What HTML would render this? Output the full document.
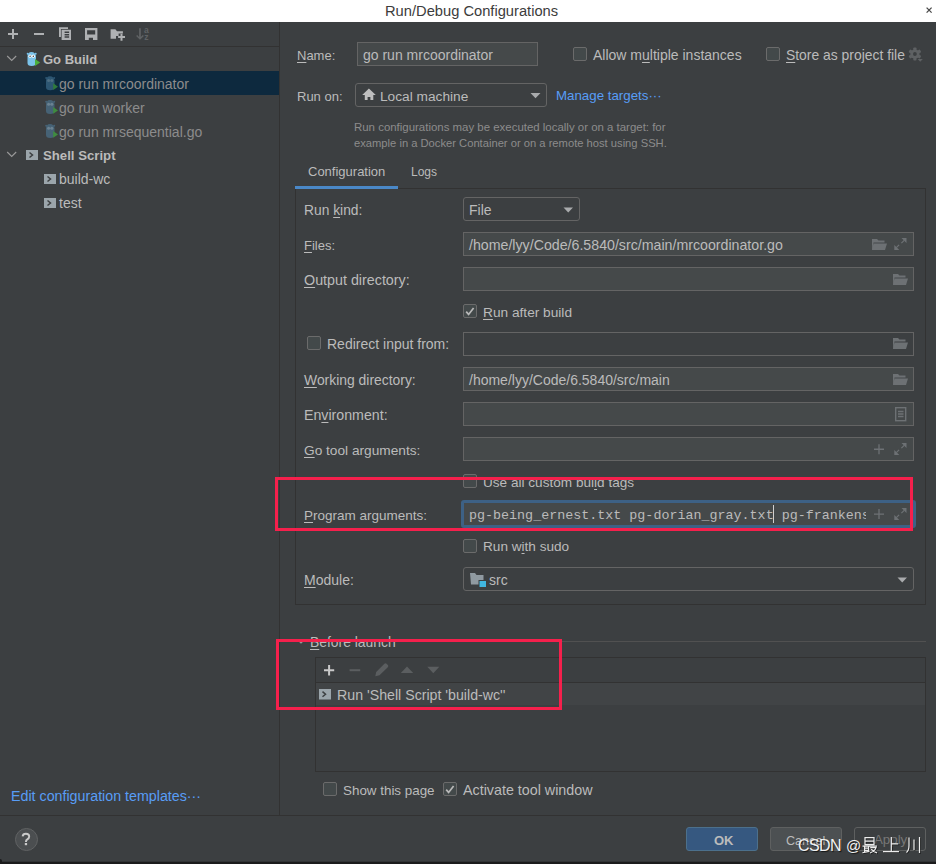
<!DOCTYPE html>
<html><head><meta charset="utf-8">
<style>
*{margin:0;padding:0;box-sizing:border-box}
html,body{width:936px;height:864px;overflow:hidden;background:#3c3f41}
body{position:relative;font-family:"Liberation Sans",sans-serif;font-size:13px;color:#bbbbbb}
.a{position:absolute}
.t{position:absolute;white-space:nowrap;line-height:16px}
u{text-decoration:underline;text-decoration-thickness:1px;text-underline-offset:2px}
.in{position:absolute;background:#45494a;border:1px solid #646464;height:24px}
.dd{position:absolute;background:#3c3f41;border:1px solid #646464;height:24px;border-radius:3px}
.cb{position:absolute;width:14px;height:14px;border:1px solid #6b6b6b;background:#43494a;border-radius:2px}
.lnk{color:#589df6}
.gray{color:#8c8c8c}
svg{position:absolute;overflow:visible}
</style></head><body>
<!-- title bar -->
<div class="a" style="left:0;top:0;width:936px;height:22px;background:#ffffff"></div>
<div class="t" style="left:385px;top:3px;color:#3c3c3c;font-size:14.7px">Run/Debug Configurations</div>
<svg style="left:0;top:0" width="936" height="22"><path d="M926.6 7.6l5 5M931.6 7.6l-5 5" stroke="#4a4a4a" stroke-width="1.3"/></svg>

<!-- left panel separators -->
<div class="a" style="left:0;top:46px;width:279px;height:1px;background:#323232"></div>
<div class="a" style="left:279px;top:22px;width:1px;height:793px;background:#323232"></div>

<!-- toolbar icons -->
<svg style="left:0;top:0" width="160" height="46">
 <g fill="#afb1b3">
  <rect x="12" y="29" width="2" height="10"/><rect x="8" y="33" width="10" height="2"/>
  <rect x="34" y="33" width="10" height="2"/>
  <path d="M59 27.2h9v1.9h-7.1v8h-1.9z"/>
  <path d="M61.6 29.8h9.4v10.2h-9.4z M64.6 31.5v1.5h4.5v-1.5z M64.6 33.9v1.5h4.5v-1.5z M64.6 36.3v1.5h4.5v-1.5z" fill-rule="evenodd"/>
  <path d="M85 28h12.4v12H85z M87.1 30.3v4.3h8.1v-4.3z M88.8 37.7v2.3h4.2v-2.3z" fill-rule="evenodd"/>
  <path d="M110.6 29.3h4.8l1.6 2h5.9v2.2h-4.3v2.4h-2.6v2.8h-5.4z"/>
  <path d="M120.5 33.8h2v2.3h2.5v2h-2.5v2.6h-2v-2.6h-2.4v-2h2.4z"/>
 </g>
 <g fill="#5f6264">
  <path d="M139.1 28.3h1.7v8.6l2-2 1.1 1.1-3.9 3.7-3.9-3.7 1.1-1.1 1.9 2z"/>
 </g>
 <text x="144" y="33.2" font-size="8.6" fill="#5f6264" font-family="Liberation Sans" font-weight="bold">a</text>
 <text x="144.3" y="39.6" font-size="8.6" fill="#5f6264" font-family="Liberation Sans" font-weight="bold">z</text>
</svg>

<!-- tree -->
<div class="a" style="left:0;top:71px;width:279px;height:24px;background:#0d293e"></div>
<svg style="left:0;top:0" width="279" height="220">
 <g fill="none" stroke="#9a9a9a" stroke-width="1.1">
  <path d="M7.2 56l4.5 4.5L16.2 56"/>
  <path d="M7.2 152l4.5 4.5L16.2 152"/>
 </g>
</svg>
<svg style="left:0;top:0" width="100" height="220">
 <defs>
  <g id="gopher">
   <path d="M1 4.5Q1 0 5 0T9.5 4.5V11Q9.5 14 5.2 14T1 11z"/>
   <circle cx="1.2" cy="1.8" r="1"/><circle cx="9.2" cy="1.8" r="1"/>
  </g>
 </defs>
 <!-- Go Build -->
 <g transform="translate(26.5,52)">
  <use href="#gopher" fill="#7bc3ea"/>
  <circle cx="3.6" cy="4.2" r="1.6" fill="#fff"/><circle cx="6.8" cy="4.2" r="1.6" fill="#fff"/>
  <circle cx="3.6" cy="4.3" r=".7" fill="#333"/><circle cx="6.8" cy="4.3" r=".7" fill="#333"/>
  <path d="M8.5 7l5.2 3.5-5.2 3.5z" fill="#4caf3d"/>
 </g>
 <g transform="translate(45,76.3)">
  <use href="#gopher" fill="#2d5672"/>
  <circle cx="3.6" cy="4.2" r="1.5" fill="#4d6e83"/><circle cx="6.8" cy="4.2" r="1.5" fill="#4d6e83"/>
  <path d="M8.2 7l4.8 3.4-4.8 3.4z" fill="#2f7a3c"/>
 </g>
 <g transform="translate(45,100)">
  <use href="#gopher" fill="#466275"/>
  <circle cx="3.6" cy="4.2" r="1.5" fill="#6b8292"/><circle cx="6.8" cy="4.2" r="1.5" fill="#6b8292"/>
  <path d="M8.2 7l4.8 3.4-4.8 3.4z" fill="#3f8c3f"/>
 </g>
 <g transform="translate(45,124)">
  <use href="#gopher" fill="#466275"/>
  <circle cx="3.6" cy="4.2" r="1.5" fill="#6b8292"/><circle cx="6.8" cy="4.2" r="1.5" fill="#6b8292"/>
  <path d="M8.2 7l4.8 3.4-4.8 3.4z" fill="#3f8c3f"/>
 </g>
 <!-- shell icons -->
 <defs>
  <g id="sh"><rect width="12" height="10" fill="#9ba5ab"/><path d="M3.5 2.5l3 2.5-3 2.5" stroke="#3c3f41" stroke-width="1.5" fill="none"/></g>
 </defs>
 <use href="#sh" x="26" y="150"/>
 <use href="#sh" x="44" y="174"/>
 <use href="#sh" x="44" y="198"/>
</svg>

<div class="t" style="left:43px;top:52px;font-weight:bold">Go Build</div>
<div class="t gray" style="left:59px;top:76px;font-size:14px">go run mrcoordinator</div>
<div class="t gray" style="left:59px;top:100px;font-size:14px">go run worker</div>
<div class="t gray" style="left:59px;top:124px;font-size:14px">go run mrsequential.go</div>
<div class="t" style="left:43px;top:148px;font-weight:bold;font-size:13.2px">Shell Script</div>
<div class="t" style="left:59px;top:171px;font-size:14px">build-wc</div>
<div class="t" style="left:59px;top:195px;font-size:14px">test</div>

<div class="t lnk" style="left:11px;top:788px;font-size:14.25px">Edit configuration templates···</div>

<!-- right panel top -->
<div class="t" style="left:297px;top:48px"><u>N</u>ame:</div>
<div class="in" style="left:357px;top:42px;width:181px"></div>
<div class="t" style="left:363px;top:47px;font-size:14px">go run mrcoordinator</div>
<div class="cb" style="left:573px;top:47px"></div>
<div class="t" style="left:593px;top:47px;font-size:14px">Allow m<u>u</u>ltiple instances</div>
<div class="cb" style="left:766px;top:47px"></div>
<div class="t" style="left:786px;top:47px;font-size:13.9px"><u>S</u>tore as project file</div>
<svg style="left:0;top:0" width="936" height="70"><g fill="#5e6163" transform="translate(914.9,54)"><rect x="-1.6" y="-6.5" width="3.2" height="13" rx=".8"/><rect x="-1.6" y="-6.5" width="3.2" height="13" rx=".8" transform="rotate(60)"/><rect x="-1.6" y="-6.5" width="3.2" height="13" rx=".8" transform="rotate(120)"/><circle r="4.6"/><circle r="1.9" fill="#3c3f41"/></g><path d="M917.6 59h5.2l-2.6 2.8z" fill="#5e6163"/></svg>

<div class="t" style="left:297px;top:89px">Run on:</div>
<div class="dd" style="left:355px;top:83px;width:192px"></div>
<svg style="left:0;top:0" width="400" height="110"><path d="M362.2 94.9L368.9 88.6L375.8 94.9H373.3V100H370.4V97.1H367.6V100H364.8V94.9z" fill="#bebebe"/></svg>
<div class="t" style="left:380px;top:89px;font-size:13.7px">Local machine</div>
<svg style="left:530px;top:92px" width="11" height="7"><path d="M0.5 1h10L5.5 6.2z" fill="#a9abad"/></svg>
<div class="t lnk" style="left:556px;top:88px;font-size:13.3px">Manage targets···</div>

<div class="t gray" style="left:354px;top:119px;font-size:11.45px">Run configurations may be executed locally or on a target: for</div>
<div class="t gray" style="left:354px;top:135px;font-size:11.2px">example in a Docker Container or on a remote host using SSH.</div>

<!-- tabs -->
<div class="t" style="left:308px;top:164px">Configuration</div>
<div class="t" style="left:411px;top:164px;font-size:12px">Logs</div>
<div class="a" style="left:295px;top:188px;width:631px;height:417px;border:1px solid #323232"></div>
<div class="a" style="left:295px;top:186px;width:103px;height:3px;background:#4a88c7"></div>

<!-- config rows -->
<div class="t" style="left:304px;top:203px;font-size:13.8px">Run <u>k</u>ind:</div>
<div class="dd" style="left:463px;top:197px;width:117px"></div>
<div class="t" style="left:469px;top:202px;font-size:14px">File</div>
<svg style="left:563px;top:207px" width="11" height="6"><path d="M0.5 0.6h9.5L5.25 5.6z" fill="#a9abad"/></svg>

<div class="t" style="left:304px;top:238px;font-size:13px"><u>F</u>iles:</div>
<div class="in" style="left:463px;top:232px;width:451px"></div>
<div class="t" style="left:469px;top:237px;font-size:14.2px">/home/lyy/Code/6.5840/src/main/mrcoordinator.go</div>

<div class="t" style="left:304px;top:272px;font-size:14.3px"><u>O</u>utput directory:</div>
<div class="in" style="left:463px;top:267px;width:451px"></div>

<div class="cb" style="left:463px;top:304px"></div>
<svg style="left:463px;top:304px" width="14" height="14"><path d="M3.2 7.6l2.4 2.8 5-6.5" stroke="#b9b9b9" stroke-width="1.7" fill="none"/></svg>
<div class="t" style="left:483px;top:305px;font-size:13.7px"><u>R</u>un after build</div>

<div class="cb" style="left:307px;top:336px"></div>
<div class="t" style="left:327px;top:336px;font-size:14px">Redirect input from:</div>
<div class="in" style="left:463px;top:332px;width:451px;background:#3c3f41"></div>

<div class="t" style="left:304px;top:372px;font-size:13.9px"><u>W</u>orking directory:</div>
<div class="in" style="left:463px;top:367px;width:451px"></div>
<div class="t" style="left:469px;top:372px;font-size:14px">/home/lyy/Code/6.5840/src/main</div>

<div class="t" style="left:304px;top:407px;font-size:14.2px">En<u>v</u>ironment:</div>
<div class="in" style="left:463px;top:402px;width:451px"></div>

<div class="t" style="left:304px;top:443px;font-size:13.7px"><u>G</u>o tool arguments:</div>
<div class="in" style="left:463px;top:437px;width:451px"></div>

<div class="cb" style="left:463px;top:474px"></div>
<div class="t" style="left:483px;top:475px;font-size:13.6px">Use all custom bui<u>l</u>d tags</div>

<div class="t" style="left:304px;top:508px;font-size:13.5px"><u>P</u>rogram arguments:</div>
<div class="a" style="left:461px;top:500px;width:455px;height:28px;border:3px solid #3d6185;border-radius:3px;background:#45494a"></div>
<div class="t" style="left:469px;top:508px;font-family:'Liberation Mono',monospace;font-size:13.36px;width:397px;overflow:hidden">pg-being_ernest.txt pg-dorian_gray.txt pg-frankenstein.txt</div>
<div class="a" style="left:773px;top:505px;width:1px;height:18px;background:#d0d0d0"></div>

<div class="cb" style="left:463px;top:539px"></div>
<div class="t" style="left:483px;top:539px;font-size:13.6px">Run w<u>i</u>th sudo</div>

<div class="t" style="left:304px;top:572px;font-size:14px"><u>M</u>odule:</div>
<div class="dd" style="left:463px;top:567px;width:451px"></div>
<svg style="left:470px;top:572px" width="17" height="15"><path d="M0 1h5l1.5 2h7v9.5h-12.5z" fill="#909aa1"/><rect x="8.5" y="8" width="8" height="7" fill="#3c3f41"/><rect x="9.5" y="9" width="6.5" height="6" fill="#40b6e0"/></svg>
<div class="t" style="left:489px;top:572px;font-size:14px">src</div>
<svg style="left:897px;top:577px" width="11" height="6"><path d="M0.5 0.6h9.5L5.25 5.6z" fill="#a9abad"/></svg>

<!-- field icons -->
<svg style="left:0;top:0" width="936" height="864">
 <defs>
  <path id="fold" d="M0 0h5l1.5 1.5h6v2h-11l-1.5 7.5z M1.5 4.5h13.5l-2 6.5h-13z"/>
  <g id="exp"><path d="M12.5 0h-5l5 5z M0.3 12h5l-5-5z" fill="#6d7174"/><path d="M10.2 2.3l-2.8 2.8 M2.3 9.7l2.8-2.8" stroke="#6d7174" stroke-width="1.2"/></g>
  <g id="plus"><path d="M0 4.4h10v1.3H0z M4.35 0h1.3v10h-1.3z"/></g>
 </defs>
 <g fill="#6d7174">
  <use href="#fold" x="872" y="239"/>
  <use href="#fold" x="893" y="274"/>
  <use href="#fold" x="893" y="338"/>
  <use href="#fold" x="893" y="374"/>
  <use href="#plus" x="874" y="444.2"/>
  <use href="#plus" x="874" y="509"/>
 </g>
 <use href="#exp" x="894" y="238"/>
 <use href="#exp" x="894" y="443"/>
 <use href="#exp" x="894" y="508"/>
 <g fill="none" stroke="#6d7174" stroke-width="1.4">
  <rect x="895.7" y="407.7" width="10" height="13"/>
  <path d="M898 411.5h5.5M898 414h5.5M898 416.5h5.5"/>
 </g>
</svg>

<!-- before launch -->
<div class="a" style="left:397px;top:641px;width:529px;height:1px;background:#515151"></div>
<svg style="left:297px;top:639px" width="8" height="6"><path d="M1 1l3 3 3-3" stroke="#9a9a9a" stroke-width="1.1" fill="none"/></svg>
<div class="t" style="left:310px;top:634px;font-size:13.9px"><u>B</u>efore launch</div>
<div class="a" style="left:315px;top:657px;width:611px;height:115px;border:1px solid #323232"></div>
<div class="a" style="left:316px;top:682px;width:609px;height:1px;background:#323232"></div>
<div class="a" style="left:316px;top:683px;width:609px;height:22px;background:#414446"></div>
<svg style="left:0;top:0" width="460" height="720">
 <path d="M324 670.2h10.2M329.1 665v10.5" stroke="#c9c9c9" stroke-width="2"/>
 <path d="M349.6 670.2h10.6" stroke="#5b5e60" stroke-width="2"/>
 <path d="M375.3 676.2L376.2 672L384.4 663.8Q385.5 662.7 386.6 663.8L387.8 665Q388.9 666.1 387.8 667.2L379.5 675.3z" fill="#5b5e60"/>
 <path d="M400.8 673l6.2-6.5 6.2 6.5z" fill="#5b5e60"/>
 <path d="M427.3 666.8h12l-6 6.4z" fill="#5b5e60"/>
</svg>
<svg style="left:319px;top:689px" width="12" height="11"><rect width="12" height="10.5" fill="#9ba5ab"/><path d="M3.5 2.6l3 2.6-3 2.6" stroke="#3c3f41" stroke-width="1.5" fill="none"/></svg>
<div class="t" style="left:337px;top:687px;font-size:14.2px">Run 'Shell Script 'build-wc''</div>

<div class="cb" style="left:323px;top:782px"></div>
<div class="t" style="left:343px;top:783px;font-size:13.4px">Show this page</div>
<div class="cb" style="left:443px;top:782px"></div>
<svg style="left:443px;top:782px" width="14" height="14"><path d="M3.2 7.6l2.4 2.8 5-6.5" stroke="#b9b9b9" stroke-width="1.7" fill="none"/></svg>
<div class="t" style="left:463px;top:782px;font-size:14.3px">Activate tool window</div>

<!-- footer -->
<div class="a" style="left:0;top:815px;width:936px;height:1px;background:#323232"></div>
<div class="a" style="left:15px;top:828px;width:23px;height:23px;border-radius:50%;background:#4b4e50;border:1px solid #606263"></div>
<svg style="left:0;top:0" width="60" height="864"><path d="M22.6 836.4Q22.9 833.8 25.9 833.8Q29.2 833.8 29.2 836.6Q29.2 838.4 27.3 839.4Q25.9 840.2 25.9 841.9" stroke="#c9c9c9" stroke-width="1.9" fill="none"/><rect x="24.8" y="843" width="2.3" height="2.2" fill="#c9c9c9"/></svg>

<div class="a" style="left:686px;top:827px;width:72px;height:24px;border-radius:3px;background:#365880;border:1px solid #4c708c"></div>
<div class="t" style="left:714px;top:833px;font-size:13px;font-weight:bold">OK</div>
<div class="a" style="left:770px;top:827px;width:72px;height:24px;border-radius:3px;background:#4c5052;border:1px solid #5e6060"></div>
<div class="t" style="left:786px;top:833px;font-size:12.6px">Cancel</div>
<div class="a" style="left:854px;top:827px;width:72px;height:24px;border-radius:3px;background:#3c3f41;border:1px solid #5e6060"></div>
<div class="t" style="left:874px;top:832px;font-size:13.3px;color:#777">Apply</div>
<div class="a" style="left:0;top:861px;width:936px;height:1px;background:#323436"></div><div class="a" style="left:0;top:862px;width:936px;height:2px;background:#1b1b1c"></div><div class="a" style="left:0;top:859px;width:2px;height:3px;background:#1b1b1c;border-top-right-radius:2px"></div>

<div class="t" style="left:798px;top:838px;font-size:16px;letter-spacing:-0.6px;color:#f2f2f2;text-shadow:1px 1px 1px rgba(0,0,0,.7)">CSDN</div>
<div class="t" style="left:846px;top:838px;font-size:15px;color:#f2f2f2;text-shadow:1px 1px 1px rgba(0,0,0,.7)">@</div>
<svg style="left:0;top:0" width="936" height="864">
 <g fill="none" stroke="rgba(0,0,0,.55)" stroke-width="1.3" transform="translate(0.8,0.8)">
  <path d="M865 837.6h9v7h-9z M865 841.1h9 M862.5 846.1h14.5 M864.6 846v6.3 M868.6 846v6.3 M864.6 848.2h4 M864.6 850.4h4 M862.5 852.6l7-1.2 M870.2 847.6h5.8q-1 3.2-6 5.4 M871.2 849.2q2 2.6 5.8 3.6"/>
  <path d="M891.3 837v14.4 M891.3 843.8h7 M883 851.6h16"/>
  <path d="M909 837.5v8q0 5-2.6 7 M914 839.6v10.4 M919.5 837v16"/>
 </g>
 <g fill="none" stroke="#ededed" stroke-width="1.2">
  <path d="M865 837.6h9v7h-9z M865 841.1h9 M862.5 846.1h14.5 M864.6 846v6.3 M868.6 846v6.3 M864.6 848.2h4 M864.6 850.4h4 M862.5 852.6l7-1.2 M870.2 847.6h5.8q-1 3.2-6 5.4 M871.2 849.2q2 2.6 5.8 3.6"/>
  <path d="M891.3 837v14.4 M891.3 843.8h7 M883 851.6h16"/>
  <path d="M909 837.5v8q0 5-2.6 7 M914 839.6v10.4 M919.5 837v16"/>
 </g>
</svg>

<!-- red annotations -->
<div class="a" style="left:275px;top:477px;width:638px;height:54px;border:3px solid #f5204c"></div>
<div class="a" style="left:276px;top:639px;width:286px;height:71px;border:3px solid #f5204c"></div>

</body></html>
